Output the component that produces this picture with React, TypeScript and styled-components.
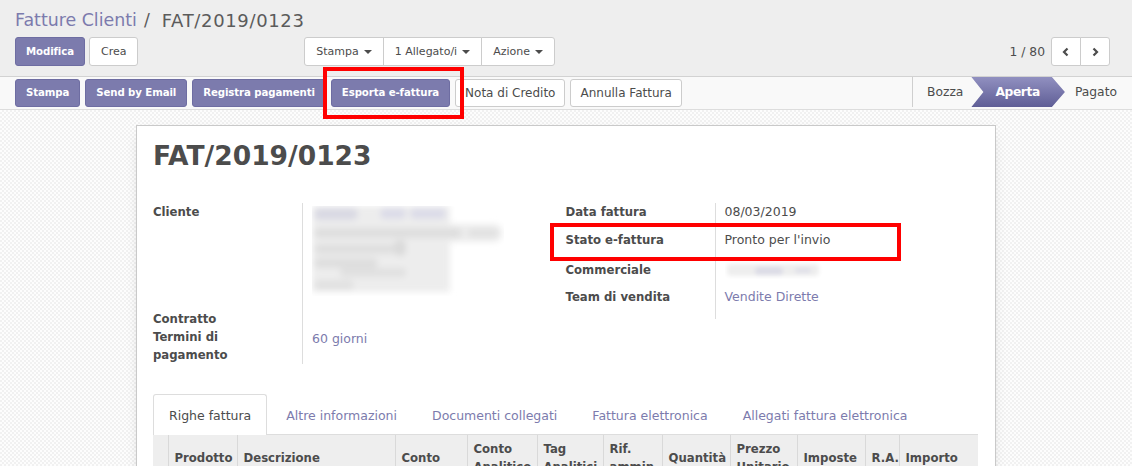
import React from "react";
import styled, { createGlobalStyle } from "styled-components";

const PURPLE = "#7c7bad";
const TEXT = "#4c4c4c";
const FONT = `"DejaVu Sans", "Lucida Grande", Verdana, sans-serif`;

const Global = createGlobalStyle`
  html, body { margin: 0; padding: 0; }
  body { font-family: ${FONT}; color: ${TEXT}; background: #fff; overflow: hidden; }
  * { box-sizing: border-box; }
`;

const Page = styled.div`
  position: relative;
  width: 1132px;
  height: 466px;
  overflow: hidden;
  display: flex;
  flex-direction: column;
  & > * {
    flex-shrink: 0;
  }
`;

const ControlPanel = styled.div`
  background: #eeeeee;
  padding: 7px 15px 0 15px;
  height: 77px;
  border-bottom: 1px solid #d2d2d2;
`;

const Breadcrumb = styled.div`
  display: flex;
  align-items: center;
  height: 26px;
  white-space: nowrap;
`;

const Crumb = styled.span`
  color: ${PURPLE};
  font-size: 17.4px;
`;

const Sep = styled.span`
  color: #5b5b5b;
  font-size: 17.4px;
  margin: 0 12px 0 7px;
`;

const Current = styled.span`
  color: #5b5b5b;
  font-size: 18px;
  letter-spacing: 0.65px;
`;

const ButtonsRow = styled.div`
  display: flex;
  align-items: center;
  margin-top: 4px;
  height: 29px;
`;

const LeftHalf = styled.div`
  flex: 0 0 50%;
  display: flex;
  justify-content: space-between;
  align-items: center;
  padding-right: 11px;
`;

const RightHalf = styled.div`
  flex: 1;
  display: flex;
  justify-content: flex-end;
  align-items: center;
`;

const Group = styled.div`
  display: flex;
  gap: 4px;
`;

const Btn = styled.button<{ $primary?: boolean; $h?: number; $big?: boolean }>`
  font-family: ${FONT};
  font-size: ${(p) => (p.$primary ? "10.2px" : p.$big ? "12px" : "11px")};
  letter-spacing: ${(p) => (p.$primary ? "-0.1px" : "0")};
  height: ${(p) => p.$h ?? 29}px;
  padding: 0 ${(p) => (p.$primary ? 10 : p.$big ? 9 : 11)}px;
  border-radius: 3px;
  border: 1px solid ${(p) => (p.$primary ? "#6e6da2" : "#cccccc")};
  background: ${(p) => (p.$primary ? PURPLE : "#ffffff")};
  color: ${(p) => (p.$primary ? "#ffffff" : TEXT)};
  font-weight: ${(p) => (p.$primary ? 700 : 400)};
  white-space: nowrap;
  display: inline-flex;
  align-items: center;
  cursor: pointer;
`;

const BtnGroup = styled.div`
  display: flex;
  & > button {
    border-radius: 0;
  }
  & > button + button {
    margin-left: -1px;
  }
  & > button:first-child {
    border-radius: 3px 0 0 3px;
  }
  & > button:last-child {
    border-radius: 0 3px 3px 0;
  }
`;

const Caret = styled.span`
  display: inline-block;
  width: 0;
  height: 0;
  border-left: 4px solid transparent;
  border-right: 4px solid transparent;
  border-top: 4px solid ${TEXT};
  margin-left: 5px;
`;

const Pager = styled.div`
  display: flex;
  align-items: center;
  gap: 6px;
  margin-right: 7px;
`;

const PagerValue = styled.span`
  font-size: 12.3px;
  color: ${TEXT};
`;

const PagerBtn = styled(Btn)`
  width: 30px;
  justify-content: center;
  padding: 0;
`;

const StatusBar = styled.div`
  display: flex;
  justify-content: space-between;
  align-items: stretch;
  height: 33px;
  background: #f9f9f9;
  border-bottom: 1px solid #dddddd;
  padding-left: 15px;
`;

const StatusButtons = styled.div`
  display: flex;
  align-items: center;
  gap: 5px;
  padding-bottom: 1px;
`;

const Statuses = styled.div`
  display: flex;
  align-items: stretch;
  height: 30px;
`;

const Status = styled.div<{ $active?: boolean; $first?: boolean }>`
  display: flex;
  align-items: center;
  font-size: 12.3px;
  white-space: nowrap;
  color: ${(p) => (p.$active ? "#ffffff" : TEXT)};
  font-weight: ${(p) => (p.$active ? 700 : 400)};
  border-left: ${(p) => (p.$first ? "1px solid #cfcfcf" : "none")};
  padding: ${(p) =>
    p.$active ? "0 25px 0 24px" : p.$first ? "0 19px 0 14px" : "0 15px 0 10px"};
  margin-left: ${(p) => (p.$active ? "-11px" : "0")};
  background: ${(p) =>
    p.$active ? "linear-gradient(#9190c0, #5f5e96)" : "transparent"};
  clip-path: ${(p) =>
    p.$active
      ? "polygon(0 0, calc(100% - 13px) 0, 100% 50%, calc(100% - 13px) 100%, 0 100%, 12px 50%)"
      : "none"};
  letter-spacing: ${(p) => (p.$active ? "-0.4px" : "0")};
`;

const SheetBg = styled.div`
  flex: 1;
  background-color: #fdfdfd;
  background-image: repeating-conic-gradient(#f1f1f1 0 25%, #fdfdfd 0 50%);
  background-size: 4px 4px;
  padding-top: 15px;
`;

const Sheet = styled.div`
  width: 860px;
  margin: 0 auto;
  background: #ffffff;
  border: 1px solid #c9c9c9;
  box-shadow: 0 4px 14px -8px rgba(0, 0, 0, 0.35);
  padding: 14px 17px 0 16px;
  min-height: 400px;
`;

const Title = styled.h1`
  margin: 0;
  font-size: 26.5px;
  line-height: 32px;
  font-weight: 700;
  color: ${TEXT};
`;

const Groups = styled.div`
  display: grid;
  grid-template-columns: 1fr 1fr;
  margin-top: 31px;
`;

const FieldGroup = styled.div`
  display: flex;
  flex-direction: column;
`;

const Row = styled.div<{ $h?: number }>`
  display: grid;
  grid-template-columns: 150px 1fr;
  height: ${(p) => (p.$h ? `${p.$h}px` : "auto")};
`;

const Label = styled.div`
  font-weight: 700;
  font-size: 11.7px;
  line-height: 18px;
  color: ${TEXT};
  border-right: 1px solid #dddddd;
  padding-right: 16px;
`;

const Value = styled.div<{ $link?: boolean; $pad?: number }>`
  font-size: 12.5px;
  line-height: 18px;
  padding-left: 9px;
  padding-top: ${(p) => p.$pad ?? 0}px;
  color: ${(p) => (p.$link ? PURPLE : TEXT)};
`;

const Notebook = styled.div`
  margin-top: 30px;
`;

const Tabs = styled.div`
  display: flex;
  height: 41px;
  border-bottom: 1px solid #dddddd;
`;

const Tab = styled.div<{ $active?: boolean }>`
  display: flex;
  align-items: center;
  height: 41px;
  padding: 0 15px;
  margin-right: 3px;
  font-size: 12.5px;
  white-space: nowrap;
  color: ${(p) => (p.$active ? TEXT : PURPLE)};
  background: ${(p) => (p.$active ? "#ffffff" : "transparent")};
  border: 1px solid ${(p) => (p.$active ? "#dddddd" : "transparent")};
  border-bottom: none;
  border-radius: 3px 3px 0 0;
  margin-bottom: -1px;
`;

const Table = styled.table`
  width: 100%;
  table-layout: fixed;
  border-collapse: collapse;
`;

const Col = styled.col<{ $w: number }>`
  width: ${(p) => p.$w}px;
`;

const Th = styled.th`
  background: #eeeeee;
  border-left: 1px solid #d9d9d9;
  padding: 2px 6px 4px;
  height: 48px;
  vertical-align: middle;
  text-align: left;
  font-weight: 700;
  font-size: 11.7px;
  line-height: 18px;
  color: ${TEXT};
  overflow: hidden;
  white-space: normal;
  &:first-child {
    border-left: none;
  }
`;

const Highlight = styled.div<{ $x: number; $y: number; $w: number; $h: number }>`
  position: absolute;
  left: ${(p) => p.$x}px;
  top: ${(p) => p.$y}px;
  width: ${(p) => p.$w}px;
  height: ${(p) => p.$h}px;
  border: 4.5px solid #ff0000;
  pointer-events: none;
`;

const Chevron = ({ dir }: { dir: "left" | "right" }) => (
  <svg width="10" height="10" viewBox="0 0 10 10">
    <polyline
      points={dir === "left" ? "6.5,1.5 3,5 6.5,8.5" : "3.5,1.5 7,5 3.5,8.5"}
      fill="none"
      stroke={TEXT}
      strokeWidth="2.2"
    />
  </svg>
);

const BlurredAddress = () => (
  <svg width="192" height="90" viewBox="0 0 192 90">
    <defs>
      <filter id="bl" x="-10%" y="-20%" width="120%" height="140%">
        <feGaussianBlur stdDeviation="3" />
      </filter>
    </defs>
    <g filter="url(#bl)">
      <rect x="0" y="0" width="138" height="86" fill="#ededed" />
      <rect x="0" y="18" width="190" height="18" rx="8" fill="#ededed" />
      <rect x="2" y="2" width="44" height="12" rx="6" fill="#d9d9e3" />
      <rect x="68" y="2" width="26" height="11" rx="5" fill="#dcdce8" />
      <rect x="98" y="2" width="36" height="11" rx="5" fill="#dcdce8" />
      <rect x="2" y="22" width="148" height="10" rx="5" fill="#dedede" />
      <rect x="156" y="23" width="30" height="8" rx="4" fill="#e0e0e0" />
      <rect x="2" y="38" width="82" height="10" rx="5" fill="#dfdfdf" />
      <rect x="82" y="34" width="12" height="16" rx="5" fill="#dadada" />
      <rect x="2" y="52" width="64" height="10" rx="5" fill="#dedede" />
      <rect x="28" y="62" width="66" height="9" rx="4" fill="#e0e0e0" />
      <rect x="2" y="74" width="40" height="10" rx="5" fill="#e1e1e1" />
    </g>
  </svg>
);

const BlurredName = () => (
  <svg width="100" height="18" viewBox="0 0 100 18">
    <defs>
      <filter id="bl2" x="-10%" y="-30%" width="120%" height="160%">
        <feGaussianBlur stdDeviation="2" />
      </filter>
    </defs>
    <g filter="url(#bl2)">
      <rect x="2" y="3" width="92" height="12" rx="4" fill="#eeeeee" />
      <rect x="30" y="6" width="28" height="8" rx="4" fill="#dcdce6" />
      <rect x="70" y="7" width="16" height="5" rx="2" fill="#dfdfe8" />
    </g>
  </svg>
);

const columns: { w: number; label: string }[] = [
  { w: 15, label: "" },
  { w: 69, label: "Prodotto" },
  { w: 158, label: "Descrizione" },
  { w: 72, label: "Conto" },
  { w: 70, label: "Conto Analitico" },
  { w: 66, label: "Tag Analitici" },
  { w: 59, label: "Rif. ammin." },
  { w: 68, label: "Quantità" },
  { w: 67, label: "Prezzo Unitario" },
  { w: 68, label: "Imposte" },
  { w: 34, label: "R.A." },
  { w: 79, label: "Importo" },
];

export default function App() {
  return (
    <Page>
      <Global />
      <ControlPanel>
        <Breadcrumb>
          <Crumb>Fatture Clienti</Crumb>
          <Sep>/</Sep>
          <Current>FAT/2019/0123</Current>
        </Breadcrumb>
        <ButtonsRow>
          <LeftHalf>
            <Group>
              <Btn $primary>Modifica</Btn>
              <Btn>Crea</Btn>
            </Group>
            <BtnGroup>
              <Btn>
                Stampa
                <Caret />
              </Btn>
              <Btn>
                1 Allegato/i
                <Caret />
              </Btn>
              <Btn>
                Azione
                <Caret />
              </Btn>
            </BtnGroup>
          </LeftHalf>
          <RightHalf>
            <Pager>
              <PagerValue>1 / 80</PagerValue>
              <BtnGroup>
                <PagerBtn>
                  <Chevron dir="left" />
                </PagerBtn>
                <PagerBtn>
                  <Chevron dir="right" />
                </PagerBtn>
              </BtnGroup>
            </Pager>
          </RightHalf>
        </ButtonsRow>
      </ControlPanel>

      <StatusBar>
        <StatusButtons>
          <Btn $primary $h={28}>Stampa</Btn>
          <Btn $primary $h={28}>Send by Email</Btn>
          <Btn $primary $h={28}>Registra pagamenti</Btn>
          <Btn $primary $h={28}>Esporta e-fattura</Btn>
          <Btn $big $h={28}>Nota di Credito</Btn>
          <Btn $big $h={28}>Annulla Fattura</Btn>
        </StatusButtons>
        <Statuses>
          <Status $first>Bozza</Status>
          <Status $active>Aperta</Status>
          <Status>Pagato</Status>
        </Statuses>
      </StatusBar>

      <SheetBg>
        <Sheet>
          <Title>FAT/2019/0123</Title>
          <Groups>
            <FieldGroup>
              <Row $h={107}>
                <Label>Cliente</Label>
                <Value $pad={3}>
                  <BlurredAddress />
                </Value>
              </Row>
              <Row>
                <Label>Contratto</Label>
                <Value />
              </Row>
              <Row>
                <Label>Termini di pagamento</Label>
                <Value $link $pad={2}>60 giorni</Value>
              </Row>
            </FieldGroup>
            <FieldGroup>
              <Row $h={28}>
                <Label>Data fattura</Label>
                <Value>08/03/2019</Value>
              </Row>
              <Row $h={30}>
                <Label>Stato e-fattura</Label>
                <Value>Pronto per l'invio</Value>
              </Row>
              <Row $h={27}>
                <Label>Commerciale</Label>
                <Value>
                  <BlurredName />
                </Value>
              </Row>
              <Row $h={31}>
                <Label>Team di vendita</Label>
                <Value $link>Vendite Dirette</Value>
              </Row>
            </FieldGroup>
          </Groups>
          <Notebook>
            <Tabs>
              <Tab $active>Righe fattura</Tab>
              <Tab>Altre informazioni</Tab>
              <Tab>Documenti collegati</Tab>
              <Tab>Fattura elettronica</Tab>
              <Tab>Allegati fattura elettronica</Tab>
            </Tabs>
            <Table>
              <colgroup>
                {columns.map((c, i) => (
                  <Col key={i} $w={c.w} />
                ))}
              </colgroup>
              <thead>
                <tr>
                  {columns.map((c, i) => (
                    <Th key={i}>{c.label}</Th>
                  ))}
                </tr>
              </thead>
            </Table>
          </Notebook>
        </Sheet>
      </SheetBg>

      <Highlight $x={323} $y={67} $w={141} $h={52} />
      <Highlight $x={550} $y={223} $w={351} $h={38} />
    </Page>
  );
}
